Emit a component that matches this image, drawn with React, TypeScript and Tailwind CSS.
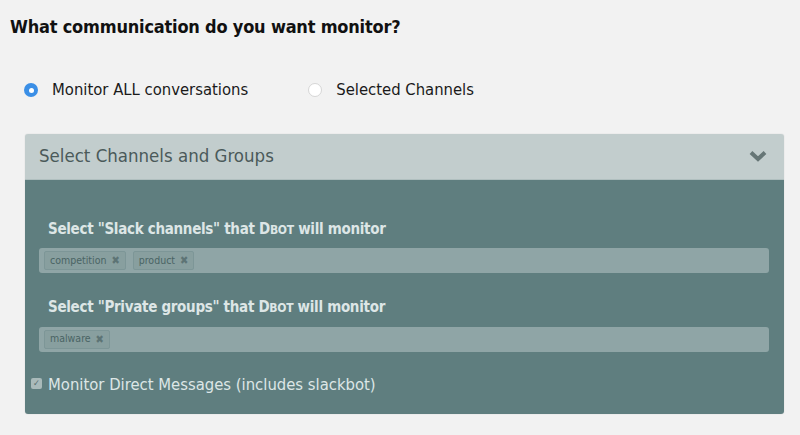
import React from "react";

const font = { fontFamily: '"DejaVu Sans Condensed", "DejaVu Sans", sans-serif' };

function Tag({ label }: { label: string }) {
  return (
    <span className="flex h-[19px] items-center gap-[5px] rounded-[2px] border border-[#7d9697] bg-[#889f9f] px-[5px] text-[10.5px] text-[#4a6464]">
      {label}
      <span className="text-[11px] leading-none text-[#5d7475]">✖</span>
    </span>
  );
}

function TagInput({ tags }: { tags: string[] }) {
  return (
    <div className="flex h-[25px] items-center gap-[7px] rounded-[3px] bg-[#8fa5a6] px-[5px]">
      {tags.map((t) => (
        <Tag key={t} label={t} />
      ))}
    </div>
  );
}

export default function App() {
  return (
    <div className="h-[435px] w-[800px] bg-[#f2f2f2] text-[#1a1a1a]" style={font}>
      <div className="px-[10px] pt-[15px]">
        <h1 className="text-[18px] font-bold leading-[24px] tracking-[-0.2px] text-[#111]">What communication do you want monitor?</h1>
      </div>
      <div className="mt-[39px] flex items-center pl-[24px] text-[16.5px]">
        <span className="flex h-[14px] w-[14px] items-center justify-center rounded-full bg-[#3b8fe6]">
          <span className="h-[5px] w-[5px] rounded-full bg-white" />
        </span>
        <span className="ml-[14px]">Monitor ALL conversations</span>
        <span className="ml-[60px] h-[14px] w-[14px] rounded-full border border-[#d6d6d6] bg-white" />
        <span className="ml-[14px]">Selected Channels</span>
      </div>
      <div className="ml-[25px] mt-[31px] w-[759px] overflow-hidden rounded-[3px] shadow-[0_0_1px_rgba(0,0,0,0.25)]">
        <div className="flex h-[46px] items-center justify-between border-b border-[#b0bfbf] bg-[#c2cdcd] pl-[14px] pr-[16px]">
          <span className="text-[18.5px] text-[#4b5a5a]">Select Channels and Groups</span>
          <svg width="20" height="14" viewBox="0 0 20 14">
            <path d="M3 3.5 L10 10 L17 3.5" fill="none" stroke="#667676" strokeWidth="4" />
          </svg>
        </div>
        <div className="bg-[#5f7e7f] pb-[16px] pl-[14px] pr-[15px] pt-[38px]">
          <div className="pl-[9px] text-[15px] font-bold tracking-[-0.3px] text-[#dde6e6]">
            Select "Slack channels" that D<span className="text-[12px]">BOT</span> will monitor
          </div>
          <div className="mt-[8px]">
            <TagInput tags={["competition", "product"]} />
          </div>
          <div className="mt-[23px] pl-[9px] text-[15px] font-bold tracking-[-0.3px] text-[#dde6e6]">
            Select "Private groups" that D<span className="text-[12px]">BOT</span> will monitor
          </div>
          <div className="mt-[8px]">
            <TagInput tags={["malware"]} />
          </div>
          <div className="-ml-[8px] mt-[21px] flex items-center">
            <span className="mb-[4px] flex h-[11px] w-[11px] items-center justify-center rounded-[2px] bg-[#a9baba] text-[9px] font-bold leading-none text-[#586f70]">✓</span>
            <span className="ml-[6px] text-[16.5px] text-[#dde6e6]">Monitor Direct Messages (includes slackbot)</span>
          </div>
        </div>
      </div>
    </div>
  );
}
